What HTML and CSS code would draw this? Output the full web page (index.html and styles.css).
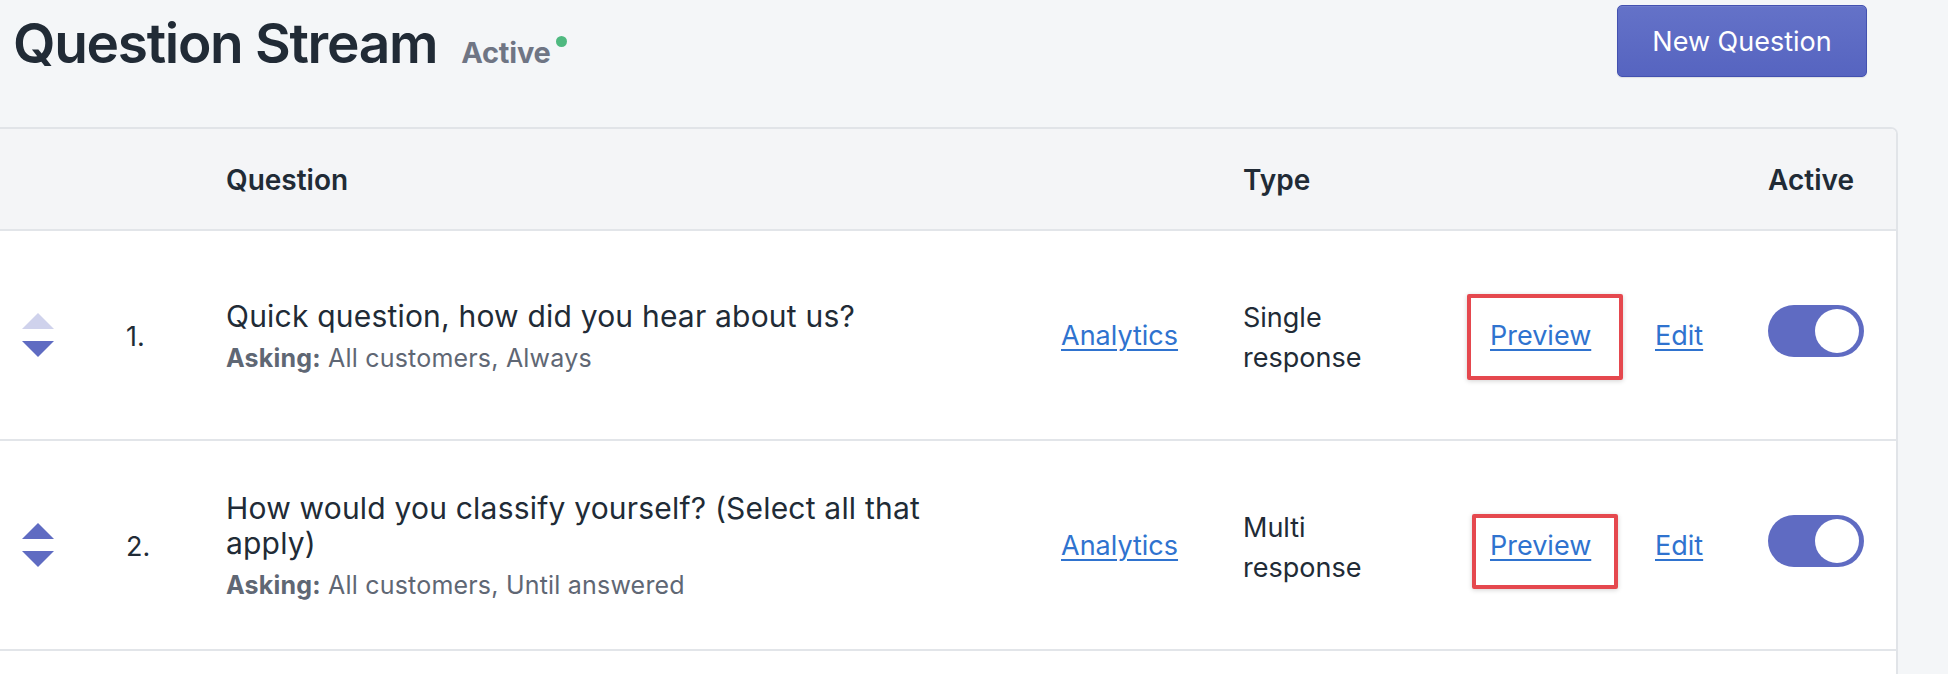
FILE: index.html
```html
<!DOCTYPE html>
<html lang="en">
<head>
<meta charset="utf-8">
<title>Question Stream</title>
<link rel="stylesheet" href="styles.css">
</head>
<body>
<div class="page">
  <header class="page-header">
    <div class="title-group">
      <h1 class="title">Question Stream</h1>
      <span class="status">Active<span class="status-dot"></span></span>
    </div>
    <button class="btn-primary" type="button">New Question</button>
  </header>

  <section class="card">
    <div class="row row-head">
      <div class="cell"></div>
      <div class="cell"></div>
      <div class="cell">Question</div>
      <div class="cell"></div>
      <div class="cell">Type</div>
      <div class="cell"></div>
      <div class="cell"></div>
      <div class="cell">Active</div>
    </div>

    <div class="row">
      <div class="cell handle">
        <span class="arrow arrow-up arrow-disabled"></span>
        <span class="arrow arrow-down"></span>
      </div>
      <div class="cell num">1.</div>
      <div class="cell question">
        <div class="q-text">Quick question, how did you hear about us?</div>
        <div class="q-meta"><b>Asking:</b> All customers, Always</div>
      </div>
      <div class="cell"><a class="link" href="#">Analytics</a></div>
      <div class="cell type">Single<br>response</div>
      <div class="cell preview"><span class="preview-wrap"><a class="link" href="#">Preview</a><span class="mark mark-1"></span></span></div>
      <div class="cell"><a class="link" href="#">Edit</a></div>
      <div class="cell"><span class="toggle"><span class="knob"></span></span></div>
    </div>

    <div class="row">
      <div class="cell handle">
        <span class="arrow arrow-up"></span>
        <span class="arrow arrow-down"></span>
      </div>
      <div class="cell num">2.</div>
      <div class="cell question">
        <div class="q-text">How would you classify yourself? (Select all that apply)</div>
        <div class="q-meta"><b>Asking:</b> All customers, Until answered</div>
      </div>
      <div class="cell"><a class="link" href="#">Analytics</a></div>
      <div class="cell type">Multi<br>response</div>
      <div class="cell preview"><span class="preview-wrap"><a class="link" href="#">Preview</a><span class="mark mark-2"></span></span></div>
      <div class="cell"><a class="link" href="#">Edit</a></div>
      <div class="cell"><span class="toggle"><span class="knob"></span></span></div>
    </div>

    <div class="row row-empty"></div>
  </section>
</div>
</body>
</html>
```

FILE: styles.css
```css
* { box-sizing: border-box; }

html, body {
  margin: 0;
  padding: 0;
  background: #f4f6f8;
  overflow: hidden;
}

body {
  font-family: Inter, "Noto Sans", "Liberation Sans", sans-serif;
  color: #212b36;
}

.page {
  padding: 0 50px 0 0;
  height: 674px;
  overflow: hidden;
}

.page-header {
  display: flex;
  justify-content: space-between;
  align-items: flex-start;
  height: 127px;
}

.title-group {
  display: flex;
  align-items: baseline;
  padding: 10px 0 0 13px;
}

.title {
  margin: 0;
  font-size: 55px;
  line-height: 66px;
  font-weight: 600;
  letter-spacing: -1.3px;
  color: #212b36;
}

.status {
  position: relative;
  margin-left: 24px;
  font-size: 29px;
  font-weight: 700;
  color: #6f7584;
  letter-spacing: -0.2px;
}

.status-dot {
  position: absolute;
  right: -16px;
  top: 1px;
  width: 11px;
  height: 11px;
  border-radius: 50%;
  background: #4fb980;
}

.btn-primary {
  margin-top: 5px;
  margin-right: 31px;
  width: 250px;
  height: 72px;
  border: 1px solid #4351b0;
  border-radius: 5px;
  background: linear-gradient(#6472c8, #5664c0);
  box-shadow: 0 1px 1px rgba(22, 29, 37, 0.1), inset 0 1px 0 rgba(255,255,255,0.08);
  color: #ffffff;
  font-family: Inter, "Noto Sans", "Liberation Sans", sans-serif;
  font-size: 27px;
  font-weight: 400;
  padding: 0;
}

.card {
  margin-left: -10px;
  background: #ffffff;
  border: 2px solid #e1e4e8;
  border-left: none;
  border-radius: 0 7px 0 0;
  overflow: hidden;
}

.row {
  display: grid;
  grid-template-columns: 136px 100px 835px 182px 224px 188px 113px 1fr;
  align-items: center;
  height: 210px;
  border-bottom: 2px solid #e2e5e9;
  font-size: 27px;
}

.row-head {
  height: 102px;
  background: #f4f5f7;
  font-weight: 600;
  font-size: 28px;
  padding-top: 2px;
}

.row-empty {
  border-bottom: none;
}

.cell {
  position: relative;
}

.handle {
  display: flex;
  flex-direction: column;
  gap: 12px;
  padding-left: 32px;
}

.arrow {
  display: block;
  width: 0;
  height: 0;
  border-left: 16px solid transparent;
  border-right: 16px solid transparent;
}

.arrow-up {
  border-bottom: 16px solid #5f6bc2;
}

.arrow-down {
  border-top: 16px solid #5f6bc2;
}

.arrow-up.arrow-disabled {
  border-bottom-color: #cfd2ec;
}

.num {
  font-size: 27px;
  padding-top: 2px;
}

.question {
  padding-right: 90px;
  padding-top: 4px;
}

.q-text {
  font-size: 30px;
  line-height: 35px;
  letter-spacing: 0.2px;
}

.q-meta {
  margin-top: 6px;
  font-size: 25px;
  line-height: 36px;
  letter-spacing: 0.2px;
  color: #5f6774;
}

.q-meta b {
  font-weight: 700;
}

.type {
  font-size: 27px;
  line-height: 40px;
  padding-top: 6px;
}

.link {
  color: #2f73cf;
  text-decoration: underline;
  text-underline-offset: 4px;
  text-decoration-thickness: 2px;
  font-size: 27px;
}

.preview {
  padding-left: 23px;
}

.preview-wrap {
  position: relative;
  display: inline-block;
}

.mark {
  position: absolute;
  border: 4px solid #e5484e;
  border-radius: 2px;
  box-shadow: 0 1px 5px rgba(0, 0, 0, 0.18);
  pointer-events: none;
}

.mark-1 {
  left: -23px;
  top: -25px;
  width: 156px;
  height: 86px;
}

.mark-2 {
  left: -18px;
  top: -15px;
  width: 146px;
  height: 75px;
}

.toggle {
  display: flex;
  align-items: center;
  justify-content: flex-end;
  width: 96px;
  height: 52px;
  padding: 0 5px;
  border-radius: 26px;
  background: #5f6bc2;
  margin-bottom: 8px;
}

.knob {
  width: 44px;
  height: 44px;
  border-radius: 50%;
  background: #ffffff;
}
```
